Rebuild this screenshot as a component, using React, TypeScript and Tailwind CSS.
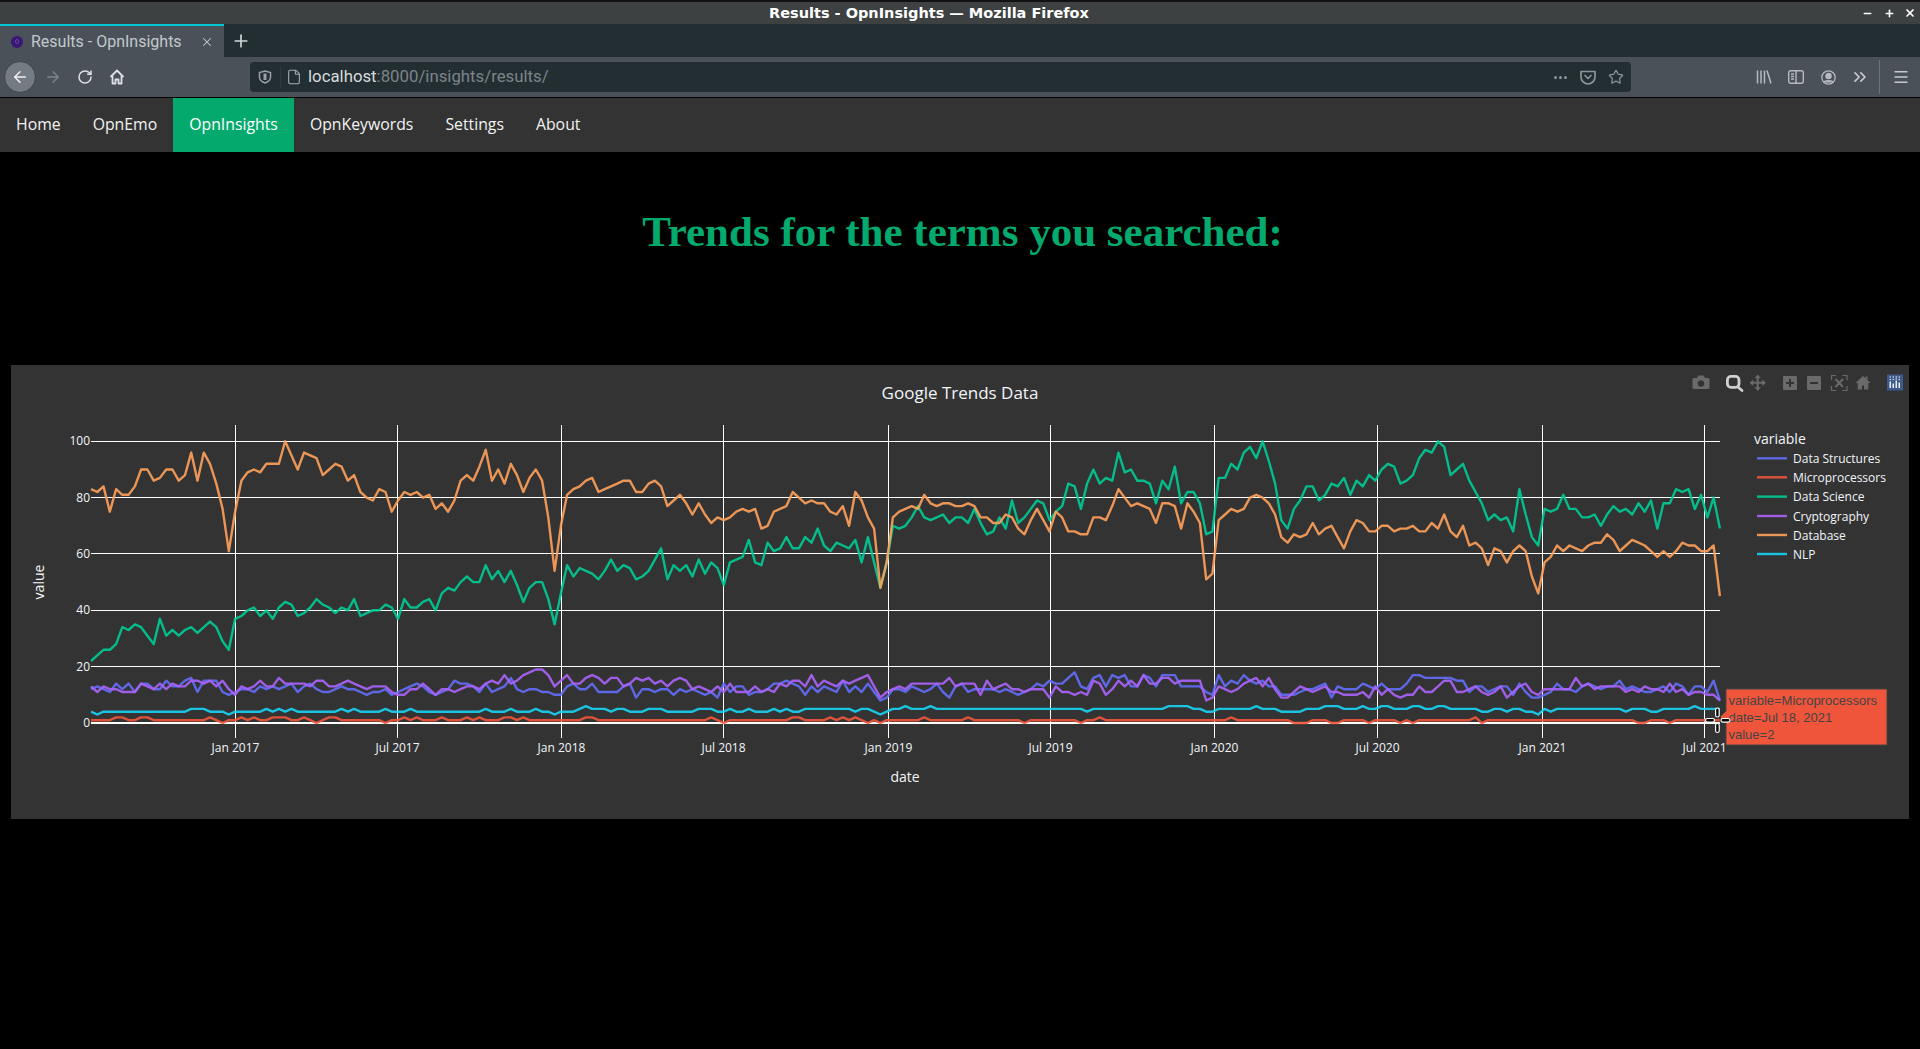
import { ArrowLeft, ArrowRight, RotateCw, X, Plus, Star, ChevronsRight, Menu, File, Minus } from "lucide-react";

// expands [value, count, value, count...] for the flat series
function runs(pairs: number[]) {
  const out: number[] = [];
  for (let i = 0; i < pairs.length; i += 2) {
    for (let n = 0; n < pairs[i + 1]; n++) out.push(pairs[i]);
  }
  return out;
}

const dataStructures = [
  12,13,12,11,14,12,14,11,14,14,12,12,15,13,13,15,16,11,15,15,15,11,10,11,12,12,11,13,12,13,12,13,14,11,13,14,12,11,11,12,13,12,12,11,10,11,11,12,10,11,12,13,14,13,11,10,11,12,15,14,14,13,11,
  14,11,12,13,16,12,11,12,12,11,11,10,10,13,14,12,12,14,11,11,11,11,13,14,9,12,12,11,12,12,10,12,11,12,11,10,11,9,14,11,13,13,10,11,11,12,14,14,15,14,13,10,13,11,13,12,11,15,11,13,11,14,11,8,9,12,12,11,13,12,11,12,14,11,9,13,
  14,11,12,12,12,12,11,12,11,10,11,12,14,13,15,14,14,16,18,13,12,16,17,13,17,16,17,13,13,17,16,13,17,17,17,13,13,13,13,11,10,17,13,15,14,17,15,14,15,13,13,10,10,10,11,12,12,13,14,9,13,12,12,12,14,13,12,14,12,12,12,14,17,17,16,16,16,
  16,16,15,15,11,13,13,11,12,13,13,10,14,11,9,9,10,11,14,12,12,11,13,14,13,12,13,13,15,12,13,12,11,11,12,13,11,14,13,10,13,13,11,15,8,
];

const microprocessors = runs([
  1,4,2,2,1,2,2,2,1,9,2,1,1,1,0,1,1,2,2,1,1,1,2,1,1,2,2,3,1,2,2,1,1,1,0,1,1,1,2,2,1,7,0,1,1,2,2,1,1,1,2,1,1,3,2,1,1,3,2,1,1,1,2,1,
  1,3,2,2,1,1,2,1,1,9,2,2,1,18,2,1,1,1,0,1,1,10,2,2,1,4,2,1,1,1,2,1,1,1,2,1,1,1,0,1,1,1,0,1,1,6,2,1,1,6,2,1,1,8,0,1,1,8,0,1,1,2,2,1,
  1,20,2,1,1,9,0,3,1,3,0,2,1,4,0,1,1,4,0,1,1,1,0,1,1,9,2,1,0,1,1,24,0,2,1,3,0,1,1,8,
]);

const dataScience = [
  22,24,26,26,28,34,33,35,34,31,28,37,31,33,31,33,34,32,34,36,34,29,26,37,38,40,41,38,40,37,41,43,42,38,39,41,44,42,41,39,41,40,44,38,39,40,40,42,41,37,44,41,41,43,44,40,46,48,47,50,52,50,50,
  56,51,54,50,54,49,43,48,50,50,44,35,46,56,52,55,54,53,51,54,58,54,56,55,51,52,54,58,62,51,56,54,56,52,58,53,57,55,49,57,58,59,65,57,56,64,61,62,66,62,62,66,64,69,63,61,64,63,62,65,57,66,57,48,57,70,69,70,73,77,73,72,73,74,71,73,
  73,71,76,71,67,68,73,69,79,71,73,76,79,78,72,75,77,85,84,76,85,90,85,87,86,96,89,90,86,86,85,78,86,83,91,78,82,82,78,67,68,87,87,92,90,96,98,94,100,93,85,72,69,76,79,84,84,79,81,85,84,87,81,86,84,88,86,90,92,91,85,86,88,94,97,96,100,
  98,88,90,92,86,82,78,72,74,72,73,68,83,74,66,63,76,75,76,81,76,76,73,73,74,70,74,77,75,76,74,78,75,79,69,78,78,83,82,83,76,81,73,80,69,
];

const cryptography = [
  13,11,13,12,12,11,11,11,14,13,12,14,12,14,13,13,15,15,14,15,13,15,12,10,13,12,13,15,13,13,16,14,14,14,14,13,15,15,13,13,14,15,14,13,12,13,13,13,11,10,10,12,12,14,12,10,12,12,11,12,13,13,12,
  14,15,14,17,14,15,17,18,19,19,17,13,15,17,14,14,16,17,16,14,16,16,13,14,16,15,16,14,15,13,15,16,15,12,13,12,11,13,11,14,11,11,11,13,11,12,11,14,13,15,15,13,17,13,15,14,13,15,14,15,16,17,13,9,11,12,13,12,14,14,14,14,14,14,16,13,
  14,14,14,10,15,12,13,14,12,12,11,12,12,12,9,13,11,11,10,11,10,15,14,10,12,15,13,15,13,17,14,14,16,16,14,15,15,15,15,8,9,13,12,11,12,14,15,16,13,16,12,9,9,11,13,12,11,12,13,11,11,10,10,10,11,9,13,10,12,10,9,10,10,13,11,11,13,
  15,15,11,11,12,13,11,10,11,13,9,11,13,14,11,10,12,12,12,12,12,16,13,14,12,13,13,13,13,11,12,11,13,12,12,11,14,11,12,10,11,11,10,10,8,
];

const database = [
  83,82,84,75,83,81,81,84,90,90,86,87,90,90,86,88,96,86,96,92,85,76,61,75,86,89,90,89,92,92,92,100,95,90,96,95,94,88,90,92,91,86,88,82,80,79,83,82,75,79,82,81,82,80,81,76,78,75,79,86,88,86,91,
  97,86,90,85,92,88,82,87,90,86,73,54,70,81,83,84,86,87,82,83,84,85,86,86,82,82,85,86,84,77,79,81,78,74,78,74,71,73,72,73,75,76,75,76,69,70,75,76,77,82,80,78,79,78,78,75,74,77,70,82,79,73,69,48,57,73,75,76,77,76,81,78,77,78,78,77,
  77,78,77,73,73,71,71,74,73,69,67,72,76,72,68,75,73,68,68,67,67,73,73,72,77,83,80,77,78,77,76,71,78,78,77,69,78,75,71,51,53,72,74,76,75,76,80,81,80,78,74,66,64,67,66,67,71,67,69,70,66,62,68,72,71,68,68,70,70,68,69,69,70,68,68,71,69,
  74,68,66,70,63,64,62,56,62,61,57,61,63,61,52,46,57,59,63,61,63,62,61,63,64,64,67,65,61,63,65,64,63,61,59,61,59,61,64,63,63,61,61,63,45,
];

const nlp = runs([
  4,1,3,1,4,14,5,3,4,3,3,1,4,5,5,1,4,1,5,1,4,1,5,1,4,7,5,1,4,1,5,1,4,4,5,1,4,3,5,1,4,11,
  5,1,4,3,5,1,4,3,5,1,4,2,3,1,4,3,5,1,6,1,5,3,4,1,5,2,4,3,5,3,4,5,5,3,4,2,5,1,4,2,5,1,4,3,5,1,4,1,5,1,4,2,5,8,4,1,5,2,4,1,3,1,4,1,5,2,6,1,5,3,6,1,
  5,24,4,1,5,12,6,4,5,2,4,2,5,6,6,1,5,3,4,4,5,3,6,3,5,3,6,1,5,2,6,2,5,3,6,2,5,2,6,2,
  5,5,4,2,5,2,4,1,5,2,4,2,3,1,5,1,4,1,5,11,4,1,5,3,4,2,5,5,6,1,5,4,
]);

const series = [
  { name: "Data Structures", color: "#636efa", values: dataStructures, labelY: 98.3 },
  { name: "Microprocessors", color: "#ef553b", values: microprocessors, labelY: 117.3 },
  { name: "Data Science", color: "#00cc96", values: dataScience, labelY: 135.6 },
  { name: "Cryptography", color: "#ab63fa", values: cryptography, labelY: 156 },
  { name: "Database", color: "#ffa15a", values: database, labelY: 175 },
  { name: "NLP", color: "#19d3f3", values: nlp, labelY: 194 },
];

const xTicks = [
  { x: 224.5, label: "Jan 2017" },
  { x: 386.5, label: "Jul 2017" },
  { x: 550.5, label: "Jan 2018" },
  { x: 712.5, label: "Jul 2018" },
  { x: 877.5, label: "Jan 2019" },
  { x: 1039.5, label: "Jul 2019" },
  { x: 1203.5, label: "Jan 2020" },
  { x: 1366.5, label: "Jul 2020" },
  { x: 1531.5, label: "Jan 2021" },
  { x: 1693.5, label: "Jul 2021" },
];

const yTicks = [0, 20, 40, 60, 80, 100];
const yGrid = [76.5, 132.5, 188.5, 245.5, 301.5];
const navItems = ["Home", "OpnEmo", "OpnInsights", "OpnKeywords", "Settings", "About"];

const px = (i: number) => 80 + 6.265 * i;
const py = (v: number) => 358 - 2.817 * v;

function toPath(values: number[]) {
  return values.map((v, i) => `${i === 0 ? "M" : "L"}${px(i).toFixed(1)},${py(v).toFixed(1)}`).join("");
}

function ModeBar() {
  const dim = "#6a6a6a";
  return (
    <g>
      {/* camera */}
      <path fill={dim} fillRule="evenodd" d="M1683,13h3l1.5,-2.5h5l1.5,2.5h3a1.5,1.5 0 0 1 1.5,1.5v8a1.5,1.5 0 0 1 -1.5,1.5h-14a1.5,1.5 0 0 1 -1.5,-1.5v-8a1.5,1.500 0 0 1 1.5,-1.5zM1690,15.200a3.300,3.300 0 1 0 0.01,0z" />
      {/* zoom, the active tool */}
      <rect x="1716.400" y="11.400" width="11.600" height="11" rx="3.600" fill="none" stroke="#cfcfcf" strokeWidth="2.800" />
      <path d="M1727.500,22.500l3.500,3" stroke="#cfcfcf" strokeWidth="2.800" strokeLinecap="round" />
      {/* pan */}
      <path fill={dim} d="M1746.700,9.500l3.200,3.700h-2.200v3.500h3.500v-2.200l3.700,3.200l-3.700,3.200v-2.200h-3.500v3.500h2.200l-3.200,3.700l-3.200,-3.700h2.200v-3.500h-3.500v2.200l-3.700,-3.200l3.700,-3.200v2.200h3.500v-3.500h-2.200z" />
      {/* zoom in */}
      <path fill={dim} fillRule="evenodd" d="M1773,11h12a1,1 0 0 1 1,1v12a1,1 0 0 1 -1,1h-12a1,1 0 0 1 -1,-1v-12a1,1 0 0 1 1,-1zM1778,14v3h-3v2h3v3h2v-3h3v-2h-3v-3z" />
      {/* zoom out */}
      <path fill={dim} fillRule="evenodd" d="M1797,11h12a1,1 0 0 1 1,1v12a1,1 0 0 1 -1,1h-12a1,1 0 0 1 -1,-1v-12a1,1 0 0 1 1,-1zM1799,17v2h8v-2z" />
      {/* autoscale */}
      <path fill="none" stroke={dim} strokeWidth="1.200" d="M1820.500,15v-4.500h4.500M1831.500,10.500h4.500v4.500M1836,21v4.500h-4.500M1825,25.500h-4.500v-4.500" />
      <path stroke={dim} strokeWidth="2" d="M1824.500,14l7.500,8M1832,14l-7.500,8" />
      {/* home */}
      <path fill={dim} d="M1844.500,18l7.500,-7l2.500,2.300v-1.800h2v3.600l3,2.900h-2.200v6.500h-4.300v-4h-2v4h-4.300v-6.500z" />
      {/* plotly logo */}
      <rect x="1876" y="9.500" width="16" height="16" fill="#3d5a8a" />
      <g fill="#e8edf5">
        <rect x="1878.500" y="16.500" width="1.500" height="6.500" />
        <rect x="1881.500" y="18.500" width="1.500" height="4.500" />
        <rect x="1884.500" y="15.500" width="1.500" height="7.500" />
        <rect x="1887.500" y="17.500" width="1.500" height="5.500" />
        <circle cx="1879.200" cy="12" r="0.700" />
        <circle cx="1882.200" cy="12" r="0.700" />
        <circle cx="1885.200" cy="12" r="0.700" />
        <circle cx="1888.200" cy="12" r="0.700" />
        <circle cx="1879.200" cy="14.500" r="0.700" />
        <circle cx="1882.200" cy="14.500" r="0.700" />
        <circle cx="1885.200" cy="14" r="0.700" />
        <circle cx="1888.200" cy="14.500" r="0.700" />
      </g>
    </g>
  );
}

function TrendsChart() {
  return (
    <svg width="1898" height="454" viewBox="0 0 1898 454" className="block">
      <text x="949" y="34" textAnchor="middle" fontSize="17" fill="#f2f5fa" fontFamily="'Open Sans', sans-serif">
        Google Trends Data
      </text>

      <ModeBar />

      {/* grid */}
      {xTicks.map((t) => (
        <line key={t.label} x1={t.x} x2={t.x} y1="60" y2="373" stroke="#ffffff" strokeWidth="1" />
      ))}
      {yGrid.map((y) => (
        <line key={y} x1="80" x2="1709" y1={y} y2={y} stroke="#ffffff" strokeWidth="1" />
      ))}
      <line x1="80" x2="1709" y1="358" y2="358" stroke="#ffffff" strokeWidth="2" />

      <g fontFamily="'Open Sans', sans-serif" fontSize="12" fill="#f2f5fa">
        {yTicks.map((v) => (
          <text key={v} x="79" y={py(v) + 4} textAnchor="end">{v}</text>
        ))}
        {xTicks.map((t) => (
          <text key={t.label} x={t.x} y="387" textAnchor="middle">{t.label}</text>
        ))}
      </g>

      <g fontFamily="'Open Sans', sans-serif" fontSize="14" fill="#f2f5fa">
        <text x="894" y="417" textAnchor="middle">date</text>
        <text x="33" y="217" textAnchor="middle" transform="rotate(-90 33 217)">value</text>
        <text x="1743" y="79">variable</text>
      </g>

      {series.map((s) => (
        <path key={s.name} d={toPath(s.values)} fill="none" stroke={s.color} strokeWidth="2.400" strokeOpacity="0.9" strokeLinejoin="round" />
      ))}

      {/* legend */}
      {series.map((s, i) => {
        const y = [93.3, 112.3, 131.6, 151, 170, 189][i];
        return (
          <g key={s.name}>
            <line x1="1746" x2="1776" y1={y} y2={y} stroke={s.color} strokeWidth="2.400" strokeOpacity="0.9" />
            <text x="1782" y={s.labelY} fontSize="12" fill="#f2f5fa" fontFamily="'Open Sans', sans-serif">{s.name}</text>
          </g>
        );
      })}

      {/* hover label */}
      <path d="M1709,352L1715,346V324H1876V380H1715V358Z" fill="#ef553b" stroke="#444444" strokeWidth="1" />
      <g fontFamily="'Liberation Sans', Arial, sans-serif" fontSize="13" fill="#444444">
        <text x="1717.500" y="340">variable=Microprocessors</text>
        <text x="1717.500" y="357">date=Jul 18, 2021</text>
        <text x="1717.500" y="374">value=2</text>
      </g>

      {/* mouse cursor */}
      <g fill="#000000" stroke="#ffffff" strokeWidth="1.200">
        <rect x="1704.600" y="343" width="3.600" height="9" rx="1.800" />
        <rect x="1704.600" y="358.500" width="3.600" height="9" rx="1.800" />
        <rect x="1694.500" y="353.500" width="9" height="3.600" rx="1.800" />
        <rect x="1710" y="353.500" width="9" height="3.600" rx="1.800" />
      </g>
    </svg>
  );
}

function FirefoxChrome() {
  const icon = "#c4cacf";
  return (
    <div className="flex flex-col font-['Roboto',sans-serif]">
      {/* window title */}
      <div className="relative flex h-6 items-center justify-center border-t-2 border-[#111] bg-[#3d4141] pr-[62px] pt-px font-['DejaVu_Sans',sans-serif] text-[14.5px] font-bold text-white">
        Results - OpnInsights — Mozilla Firefox
        <div className="absolute right-0 top-0 flex h-full items-center text-white">
          <span className="flex w-[22px] justify-center"><Minus size={11} strokeWidth={3.500} /></span>
          <span className="flex w-[22px] justify-center"><Plus size={11} strokeWidth={3.500} /></span>
          <span className="flex w-[20px] justify-center"><X size={12} strokeWidth={3.500} /></span>
        </div>
      </div>

      {/* tabs */}
      <div className="flex h-[33px] items-stretch bg-[#232e33]">
        <div className="flex w-56 items-center border-t-2 border-[#00c8d7] bg-[#4a5159] pl-[11px] text-[16px] text-[#c3c9cd]">
          <span className="flex h-3 w-3 items-center justify-center rounded-full bg-[#3a1675]">
            <span className="h-[5px] w-1 rounded-full border border-[#5c4a8c]" />
          </span>
          <span className="ml-2 flex-1">Results - OpnInsights</span>
          <X size={14} strokeWidth={1.800} className="mr-[10px]" />
        </div>
        <Plus size={20} strokeWidth={2} color="#d2d6d9" className="ml-[7px] self-center" />
      </div>

      {/* toolbar */}
      <div className="flex h-[40px] items-center bg-[#4a5159]">
        <div className="ml-1 flex h-8 w-8 items-center justify-center rounded-full border border-[#3d444b] bg-[#757b82]">
          <ArrowLeft size={18} strokeWidth={2} color="#eef0f1" />
        </div>
        <div className="ml-px flex w-8 justify-center"><ArrowRight size={18} strokeWidth={1.800} color="#7d848a" /></div>
        <div className="flex w-8 justify-center"><RotateCw size={16} strokeWidth={2.200} color="#e0e3e5" /></div>
        <div className="flex w-8 justify-center">
          <svg width="16" height="16" viewBox="0 0 16 16" fill="none" stroke="#e0e3e5" strokeWidth="1.800" strokeLinejoin="round">
            <path d="M1.500,8L8,1.500L14.500,8" />
            <path d="M3.500,7v7.500h3v-4h3v4h3v-7.500" />
          </svg>
        </div>

        <div className="ml-[117px] flex h-[30px] w-[1381px] items-center rounded bg-[#232e33] text-[16.800px]">
          <div className="flex w-[30px] justify-center">
            <svg width="14" height="14" viewBox="0 0 14 14" fill="none" stroke="#9aa1a6" strokeWidth="1.500">
              <path d="M7,1L12.500,2.500V7C12.500,10,10,12,7,13C4,12,1.500,10,1.500,7V2.500Z" />
              <path d="M7,3.500V10" strokeWidth="3" />
            </svg>
          </div>
          <div className="h-[22px] w-px bg-[#2f3a40]" />
          <div className="ml-[5px] flex w-4 justify-center"><File size={16} strokeWidth={1.600} color="#a7adb2" /></div>
          <div className="ml-[6px] text-[#d8dbdd]">
            localhost<span className="text-[#7d8489]">:8000/insights/results/</span>
          </div>
          <div className="ml-auto mr-px flex items-center">
            <div className="flex w-7 justify-center gap-[2px]">
              <span className="h-[3px] w-[3px] rounded-full bg-[#8d9499]" />
              <span className="h-[3px] w-[3px] rounded-full bg-[#8d9499]" />
              <span className="h-[3px] w-[3px] rounded-full bg-[#8d9499]" />
            </div>
            <div className="flex w-7 justify-center">
              <svg width="16" height="15" viewBox="0 0 16 15" fill="none" stroke="#8d9499" strokeWidth="1.700" strokeLinecap="round" strokeLinejoin="round">
                <path d="M1,1.500H15V7A7,7 0 0 1 1,7Z" />
                <path d="M5,5.500L8,8.500L11,5.500" />
              </svg>
            </div>
            <div className="flex w-7 justify-center"><Star size={16} strokeWidth={1.800} color="#8d9499" /></div>
          </div>
        </div>

        <div className="ml-[117px] flex w-8 justify-center">
          <svg width="16" height="14" viewBox="0 0 16 14" stroke="#b4babf" strokeWidth="1.500" fill="none">
            <path d="M1.500,0.500V13.500M5,0.500V13.500M8.500,0.500V13.500M11,0.500L15,13.500" />
          </svg>
        </div>
        <div className="flex w-8 justify-center">
          <svg width="16" height="14" viewBox="0 0 16 14" stroke="#b4babf" strokeWidth="1.400" fill="none">
            <rect x="0.700" y="0.700" width="14.600" height="12.600" rx="2" />
            <path d="M8,1V13M3,4H6M3,6.500H6M3,9H6" />
          </svg>
        </div>
        <div className="flex w-8 justify-center">
          <svg width="15" height="15" viewBox="0 0 15 15" stroke="#b4babf" strokeWidth="1.300" fill="none">
            <circle cx="7.500" cy="7.500" r="6.700" />
            <circle cx="7.500" cy="6" r="2.600" fill="#b4babf" />
            <path d="M3,12.500C3.500,10,11.500,10,12,12.500" fill="#b4babf" />
          </svg>
        </div>
        <div className="flex w-8 justify-center"><ChevronsRight size={20} strokeWidth={2} color={icon} /></div>
        <div className="ml-[3px] h-[34px] w-px bg-[#6c747b]" />
        <div className="ml-[5px] flex w-8 justify-center"><Menu size={18} strokeWidth={1.800} color={icon} /></div>
      </div>
    </div>
  );
}

export default function App() {
  return (
    <div className="flex min-h-screen flex-col overflow-hidden bg-black">
      <FirefoxChrome />

      <nav className="mt-px flex h-[54px] bg-[#333333] font-['Open_Sans',sans-serif] text-[15.800px] text-[#f2f2f2]">
        {navItems.map((item) => (
          <a
            key={item}
            className={item === "OpnInsights" ? "flex items-center bg-[#04aa6d] px-4 text-white" : "flex items-center px-4"}
          >
            {item}
          </a>
        ))}
      </nav>

      <h1 className="mt-[56px] pl-[5px] text-center font-['Liberation_Serif',serif] text-[43px] font-bold leading-[47px] text-[#04aa6d]">
        Trends for the terms you searched:
      </h1>

      <section className="mx-[11px] mt-[110px] bg-[#333333]">
        <TrendsChart />
      </section>
    </div>
  );
}
